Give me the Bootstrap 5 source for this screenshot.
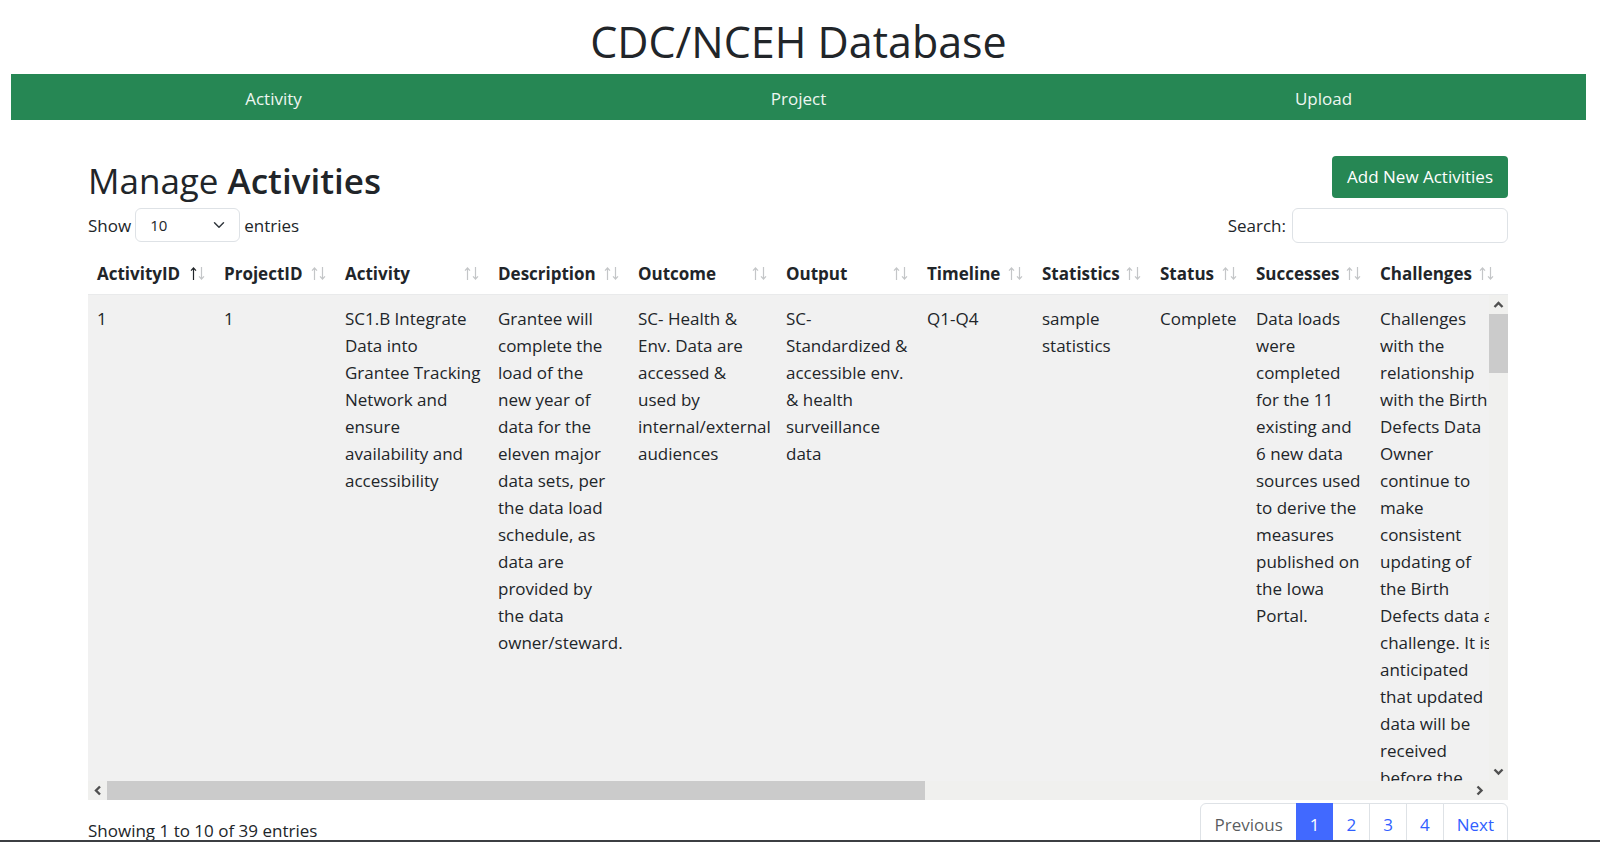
<!DOCTYPE html>
<html lang="en">
<head>
<meta charset="utf-8">
<meta name="viewport" content="width=device-width, initial-scale=1">
<title>CDC/NCEH Database</title>
<link href="https://cdn.jsdelivr.net/npm/bootstrap@5.3.0/dist/css/bootstrap.min.css" rel="stylesheet">
<style>
  body { font-family: "Open Sans", "Noto Sans", sans-serif; font-size: 17px; line-height: 27px; color: #212529; height: 100vh; overflow: hidden; border-bottom: 2px solid #3c3f43; padding: 0 14px 0 11px; }
  .site-title { font-size: 43px; line-height: 54px; font-weight: 400; padding: 15px 0 5px; margin: 0; }
  .site-nav { background: #268754; height: 46px; padding-top: 2px; }
  .site-nav a { color: #eef6f1; text-decoration: none; }
  .page-body { margin: 36px 78px 0 77px; }
  .page-title { font-size: 35px; line-height: 42px; font-weight: 400; margin: 0; }
  .page-title b { font-weight: 600; }
  .btn-add { background: #268754; color: #fff; font-size: 17px; line-height: 28px; padding: 7px 15px; border: 0; border-radius: 4px; }
  .btn-add:hover { background: #1c6f44; color: #fff; }
  .controls { margin-top: 6px; }
  .form-select.len-select { width: 105px; height: 34px; font-size: 15px; padding: 4px 40px 4px 14px; border-color: #dee2e6; }
  .form-control.search-box { width: 216px; height: 35px; border-color: #dee2e6; }
  .search-group { gap: 6px; }
  .head-clip, .body-clip { overflow: hidden; }
  .grid-table { table-layout: fixed; width: 2440px; margin: 0; border-collapse: collapse; }
  .grid-table th, .grid-table td { padding: 10px 9px; vertical-align: top; white-space: nowrap; text-align: left; }
  .grid-table th { padding: 17px 10px 7px 9px; }
  .grid-table td { background: #f1f1f1; }
  .head-clip { border-bottom: 1px solid #e9eaeb; }
  .w-aid { width: 127px; } .w-pid { width: 121px; } .w-act { width: 153px; } .w-desc { width: 140px; }
  .w-outc { width: 148px; } .w-outp { width: 141px; } .w-time { width: 115px; } .w-stat { width: 118px; }
  .w-status { width: 96px; } .w-succ { width: 124px; } .w-chal { width: 133px; }
  .sorter { width: 15px; height: 13px; color: #c4c6c8; }
  .sorter .on { color: #212529; }
  .scroll-area { display: grid; grid-template-columns: minmax(0, 1fr) 19px; grid-template-rows: minmax(0, 1fr) 19px; height: 60vh; background: #f0f0ee; }
  .bar-icon { width: 19px; height: 19px; flex: none; color: #505050; }
  .thumb { background: #cbcbcb; }
  .vbar .thumb { height: 59px; }
  .hbar .thumb { width: 58.4%; }
  .pagination { --bs-pagination-font-size: 17px; --bs-pagination-padding-x: 13px; --bs-pagination-padding-y: 7px; --bs-pagination-color: #315fff; --bs-pagination-active-bg: #4169ff; --bs-pagination-active-border-color: #4169ff; --bs-pagination-disabled-bg: #fff; margin: 0; padding-top: 3px; }
  .table-info-text { padding-top: 17px; }
</style>
</head>
<body>
<svg class="d-none" xmlns="http://www.w3.org/2000/svg">
  <symbol id="up" viewBox="0 0 7 13"><path d="M3.5 13V1M1 3.700 3.500 1 6 3.700" fill="none" stroke="currentColor" stroke-width="1.200"/></symbol>
  <symbol id="down" viewBox="0 0 7 13"><path d="M3.5 0v12M1 9.300 3.500 12 6 9.300" fill="none" stroke="currentColor" stroke-width="1.200"/></symbol>
  <symbol id="sort" viewBox="0 0 15 13"><use href="#up" width="7" height="13"/><use href="#down" x="8" width="7" height="13"/></symbol>
</svg>

<header>
  <h1 class="site-title text-center">CDC/NCEH Database</h1>
  <nav class="site-nav row g-0 align-items-center text-center">
    <div class="col"><a href="#">Activity</a></div>
    <div class="col"><a href="#">Project</a></div>
    <div class="col"><a href="#">Upload</a></div>
  </nav>
</header>

<main class="page-body">
  <div class="d-flex justify-content-between align-items-start">
    <h2 class="page-title pt-1">Manage <b>Activities</b></h2>
    <button type="button" class="btn btn-add">Add New Activities</button>
  </div>
  <div class="controls d-flex justify-content-between align-items-start">
    <div class="d-flex align-items-center">
      <label for="len">Show</label>
      <select id="len" class="form-select len-select mx-1"><option>10</option><option>25</option><option>50</option></select>
      <label for="len">entries</label>
    </div>
    <div class="search-group d-flex align-items-center">
      <label for="search">Search:</label>
      <input id="search" type="search" class="form-control search-box">
    </div>
  </div>

  <div class="head-clip">
    <table class="grid-table">
      <colgroup><col class="w-aid"><col class="w-pid"><col class="w-act"><col class="w-desc"><col class="w-outc"><col class="w-outp"><col class="w-time"><col class="w-stat"><col class="w-status"><col class="w-succ"><col class="w-chal"><col></colgroup>
      <thead>
        <tr>
          <th><div class="d-flex justify-content-between align-items-center">ActivityID<svg class="sorter" viewBox="0 0 15 13"><use class="on" href="#up" width="7" height="13"/><use href="#down" x="8" width="7" height="13"/></svg></div></th>
          <th><div class="d-flex justify-content-between align-items-center">ProjectID<svg class="sorter"><use href="#sort"/></svg></div></th>
          <th><div class="d-flex justify-content-between align-items-center">Activity<svg class="sorter"><use href="#sort"/></svg></div></th>
          <th><div class="d-flex justify-content-between align-items-center">Description<svg class="sorter"><use href="#sort"/></svg></div></th>
          <th><div class="d-flex justify-content-between align-items-center">Outcome<svg class="sorter"><use href="#sort"/></svg></div></th>
          <th><div class="d-flex justify-content-between align-items-center">Output<svg class="sorter"><use href="#sort"/></svg></div></th>
          <th><div class="d-flex justify-content-between align-items-center">Timeline<svg class="sorter"><use href="#sort"/></svg></div></th>
          <th><div class="d-flex justify-content-between align-items-center">Statistics<svg class="sorter"><use href="#sort"/></svg></div></th>
          <th><div class="d-flex justify-content-between align-items-center">Status<svg class="sorter"><use href="#sort"/></svg></div></th>
          <th><div class="d-flex justify-content-between align-items-center">Successes<svg class="sorter"><use href="#sort"/></svg></div></th>
          <th><div class="d-flex justify-content-between align-items-center">Challenges<svg class="sorter"><use href="#sort"/></svg></div></th>
          <th></th>
        </tr>
      </thead>
    </table>
  </div>

  <div class="scroll-area">
    <div class="body-clip">
      <table class="grid-table">
        <colgroup><col class="w-aid"><col class="w-pid"><col class="w-act"><col class="w-desc"><col class="w-outc"><col class="w-outp"><col class="w-time"><col class="w-stat"><col class="w-status"><col class="w-succ"><col class="w-chal"><col></colgroup>
        <tbody>
          <tr>
            <td>1</td>
            <td>1</td>
            <td>SC1.B Integrate<br>Data into<br>Grantee Tracking<br>Network and<br>ensure<br>availability and<br>accessibility</td>
            <td>Grantee will<br>complete the<br>load of the<br>new year of<br>data for the<br>eleven major<br>data sets, per<br>the data load<br>schedule, as<br>data are<br>provided by<br>the data<br>owner/steward.</td>
            <td>SC- Health &amp;<br>Env. Data are<br>accessed &amp;<br>used by<br>internal/external<br>audiences</td>
            <td>SC-<br>Standardized &amp;<br>accessible env.<br>&amp; health<br>surveillance<br>data</td>
            <td>Q1-Q4</td>
            <td>sample<br>statistics</td>
            <td>Complete</td>
            <td>Data loads<br>were<br>completed<br>for the 11<br>existing and<br>6 new data<br>sources used<br>to derive the<br>measures<br>published on<br>the Iowa<br>Portal.</td>
            <td>Challenges<br>with the<br>relationship<br>with the Birth<br>Defects Data<br>Owner<br>continue to<br>make<br>consistent<br>updating of<br>the Birth<br>Defects data a<br>challenge. It is<br>anticipated<br>that updated<br>data will be<br>received<br>before the</td>
            <td></td>
          </tr>
        </tbody>
      </table>
    </div>
    <div class="vbar d-flex flex-column">
      <svg class="bar-icon" viewBox="0 0 19 19"><path d="M5.500 12 9.500 8l4 4" fill="none" stroke="currentColor" stroke-width="2.400"/></svg>
      <div class="thumb"></div>
      <svg class="bar-icon mt-auto" viewBox="0 0 19 19"><path d="M5.500 7.500l4 4 4-4" fill="none" stroke="currentColor" stroke-width="2.400"/></svg>
    </div>
    <div class="hbar d-flex">
      <svg class="bar-icon" viewBox="0 0 19 19"><path d="M12 5.500 8 9.500l4 4" fill="none" stroke="currentColor" stroke-width="2.400"/></svg>
      <div class="thumb flex-grow-0"></div>
      <svg class="bar-icon ms-auto" viewBox="0 0 19 19"><path d="M7.500 5.500l4 4-4 4" fill="none" stroke="currentColor" stroke-width="2.400"/></svg>
    </div>
  </div>

  <div class="d-flex justify-content-between align-items-start">
    <div class="table-info-text">Showing 1 to 10 of 39 entries</div>
    <nav aria-label="Table pages">
      <ul class="pagination">
        <li class="page-item disabled"><a class="page-link" href="#">Previous</a></li>
        <li class="page-item active"><a class="page-link" href="#">1</a></li>
        <li class="page-item"><a class="page-link" href="#">2</a></li>
        <li class="page-item"><a class="page-link" href="#">3</a></li>
        <li class="page-item"><a class="page-link" href="#">4</a></li>
        <li class="page-item"><a class="page-link" href="#">Next</a></li>
      </ul>
    </nav>
  </div>
</main>
<script src="https://cdn.jsdelivr.net/npm/bootstrap@5.3.0/dist/js/bootstrap.bundle.min.js"></script>
</body>
</html>
